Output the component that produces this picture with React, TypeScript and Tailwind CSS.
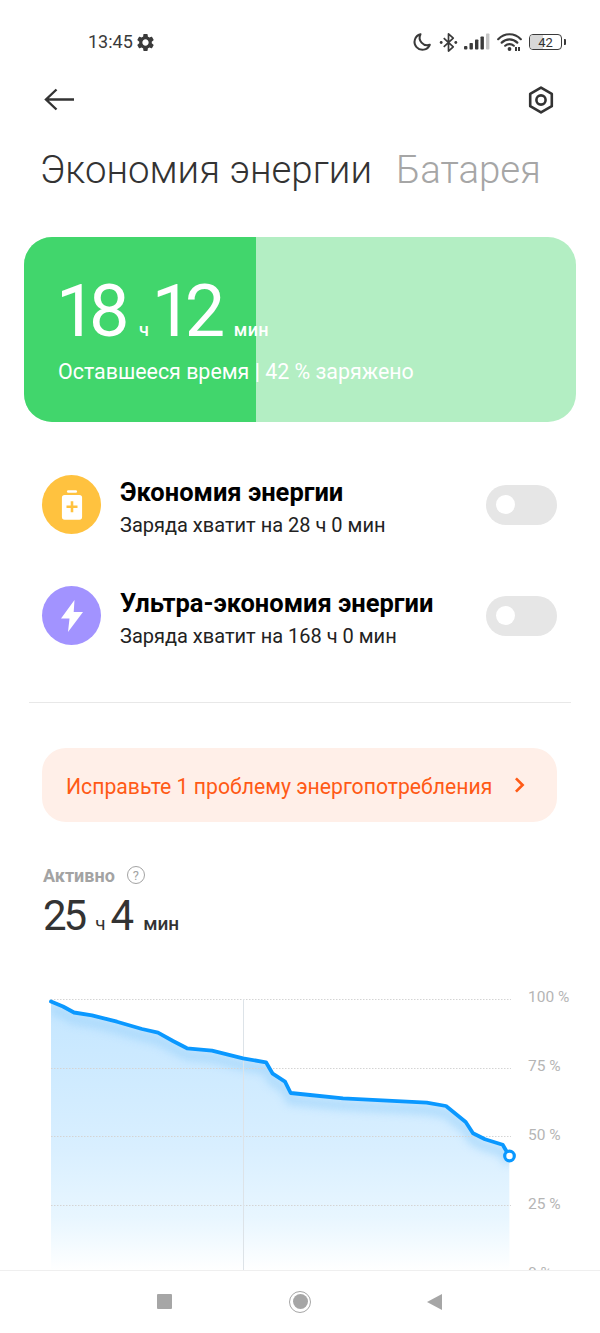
import React from "react";
import { MdSettings } from "react-icons/md";

const line: [number, number][] = [
  [51, 1000.5], [63, 1005.5], [74, 1011.5], [92, 1014.3], [117, 1020.7], [142, 1028], [158, 1031.7],
  [173, 1040], [187, 1047.3], [212, 1049.7], [243, 1057.3], [266, 1061.3], [272.7, 1072.7], [285, 1080.7],
  [290.7, 1092], [310, 1094], [343, 1097.3], [426.7, 1101.7], [446, 1105], [465.7, 1121], [473, 1132.3],
  [485, 1138.3], [502.7, 1143.7], [509.3, 1155],
];
const top = 985;
const pts = line.map(([x, y]) => `${x},${y - top}`).join(" ");
const shadowPts = line.map(([x, y]) => `${x},${y - top + 7}`).join(" ");
const area = `51,285 ${pts} 509.5,285`;

function StatusBar() {
  return (
    <div className="h-[68px] shrink-0 pt-[31px] pl-[88px] pr-[34px] flex items-start justify-between text-[#3a3a3a]">
      <div className="flex items-center gap-[2px] h-[22px]">
        <span className="text-[18px] leading-[22px]">13:45</span>
        <MdSettings className="w-[21px] h-[21px]" />
      </div>
      <div className="flex items-center h-[22px]">
        <svg viewBox="0 0 20 20" className="w-[20px] h-[20px] mr-[7px]" fill="none" stroke="#3a3a3a" strokeWidth="2">
          <path d="M8.500 2.200a7.900 7.900 0 1 0 9.300 10.600A7.600 7.600 0 0 1 8.500 2.200z" strokeLinejoin="round" />
        </svg>
        <svg viewBox="0 0 20 22" className="w-[19px] h-[21px] mr-[6px]" fill="none" stroke="#3a3a3a" strokeWidth="1.800">
          <path d="M5 6.500l10 9-5 4.500V2l5 4.500-10 9" strokeLinejoin="round" />
          <circle cx="2.300" cy="11" r="1.500" fill="#3a3a3a" stroke="none" />
          <circle cx="17.700" cy="11" r="1.500" fill="#3a3a3a" stroke="none" />
        </svg>
        <svg viewBox="0 0 26 18" className="w-[26px] h-[18px] mr-[7px]" fill="#3a3a3a">
          <rect x="0" y="13" width="3.400" height="3.600" rx="1" />
          <rect x="5.500" y="10" width="3.400" height="6.600" rx="0.800" />
          <rect x="11" y="6.500" width="3.400" height="10" rx="0.800" />
          <rect x="16.500" y="3.500" width="3.400" height="13" rx="0.800" />
          <rect x="22" y="0.500" width="3.400" height="16" rx="0.800" fill="#c4c4c4" />
        </svg>
        <svg viewBox="0 0 25 20" className="w-[25px] h-[20px] mr-[7px]" fill="none" stroke="#3a3a3a" strokeWidth="2.200" strokeLinecap="round">
          <path d="M1.200 7.200C7.500 .6 17.500 .6 23.800 7.200" />
          <path d="M4.700 10.600c4.400-4.400 11.200-4.400 15.600 0" />
          <path d="M8.200 13.700c2.400-2.200 6.200-2.200 8.600 0" />
          <circle cx="12.500" cy="17" r="1.900" fill="#3a3a3a" stroke="none" />
          <rect x="18" y="15" width="2" height="4" fill="#3a3a3a" stroke="none" />
          <rect x="21" y="15" width="2" height="4" fill="#3a3a3a" stroke="none" />
        </svg>
        <div className="relative w-[33px] h-[16px] rounded-[4px] border-[1.500px] border-[#3a3a3a] overflow-hidden flex items-center justify-center">
          <div className="absolute left-0 top-0 bottom-0 w-[42%] bg-[#d8d8d8]" />
          <span className="relative text-[13px] leading-none text-[#333]">42</span>
        </div>
        <div className="w-[2px] h-[6px] ml-[2px] bg-[#3a3a3a] rounded-r-[1px]" />
      </div>
    </div>
  );
}

function Header() {
  return (
    <div className="h-[63px] shrink-0 pl-[44px] pr-[46px] flex items-center justify-between">
      <svg viewBox="0 0 32 24" className="w-[32px] h-[24px]" fill="none" stroke="#333" strokeWidth="2.400">
        <path d="M30 11.500H2M12.500 1.500L2 11.500l10.500 10" />
      </svg>
      <svg viewBox="0 0 26 28" className="w-[26px] h-[28px]" fill="none" stroke="#333" strokeWidth="2.600">
        <path d="M13 1.600l10.800 6.200v12.400L13 26.400 2.200 20.200V7.800z" strokeLinejoin="round" />
        <circle cx="13" cy="14" r="4.600" />
      </svg>
    </div>
  );
}

function Row({ color, icon, title, sub }: { color: string; icon: React.ReactNode; title: string; sub: string }) {
  return (
    <div className="flex items-center h-[111px] pl-[42px] pr-[43px]">
      <div className={`w-[59px] h-[59px] rounded-full flex items-center justify-center ${color}`}>{icon}</div>
      <div className="ml-[19px] flex-1 pt-[4px]">
        <div className="text-[25.500px] leading-[32px] font-bold text-black whitespace-nowrap">{title}</div>
        <div className="text-[20px] leading-[26px] mt-[4px] text-[#222] whitespace-nowrap">{sub}</div>
      </div>
      <div className="w-[71px] h-[40px] rounded-full bg-[#e6e6e6] flex items-center pl-[10px]">
        <div className="w-[19px] h-[19px] rounded-full bg-white" />
      </div>
    </div>
  );
}

export default function App() {
  return (
    <div className="w-[600px] h-[1333px] bg-white overflow-hidden flex flex-col font-['Roboto',sans-serif]">
      <StatusBar />
      <Header />
      <div className="shrink-0 h-[106px] pl-[40px] flex items-start gap-[24px] pt-[16px] text-[38.400px] leading-[46px] font-light whitespace-nowrap">
        <span className="text-[#333]">Экономия энергии</span>
        <span className="text-[#a6a6a6]">Батарея</span>
      </div>
      <div className="shrink-0 relative mx-[24px] h-[185px] rounded-[28px] overflow-hidden bg-[#b3eec3] text-white">
        <div className="absolute left-0 top-0 bottom-0 w-[232px] bg-[#41d66c]" />
        <div className="relative pl-[32px] pt-[34px]">
          <div className="flex items-baseline h-[82px] whitespace-nowrap">
            <span className="text-[72px] leading-[82px] tracking-[-7.500px]">18</span>
            <span className="text-[18px] font-medium ml-[17px] mr-[3px]">ч</span>
            <span className="text-[72px] leading-[82px] tracking-[-7.500px]">12</span>
            <span className="text-[18px] font-medium ml-[16px] tracking-[0.4px]">мин</span>
          </div>
          <div className="pl-[2px] text-[21.400px] leading-[26px] mt-[6px] whitespace-nowrap">Оставшееся время | 42 % заряжено</div>
        </div>
      </div>
      <div className="shrink-0 mt-[27px]">
        <Row
          color="bg-[#ffc23f]"
          title="Экономия энергии"
          sub="Заряда хватит на 28 ч 0 мин"
          icon={
            <svg viewBox="0 0 24 32" className="w-[22px] h-[30px]">
              <rect x="6.500" y="0" width="11" height="2.600" rx="1.300" fill="#fff" />
              <rect x="1" y="5" width="22" height="27" rx="3" fill="#fff" />
              <path d="M12 12v12M6 18h12" stroke="#ffc23f" strokeWidth="2.800" />
            </svg>
          }
        />
        <Row
          color="bg-[#a293ff]"
          title="Ультра-экономия энергии"
          sub="Заряда хватит на 168 ч 0 мин"
          icon={
            <svg viewBox="0 0 22 32" className="w-[22px] h-[32px]" fill="#fff">
              <path d="M13.500 0L0 18.500h8.500L7 32l15-20h-9.300z" />
            </svg>
          }
        />
      </div>
      <div className="shrink-0 mt-[31px] mx-[29px] h-px bg-[#e8e8e8]" />
      <div className="shrink-0 mt-[45px] ml-[42px] mr-[43px] h-[74px] rounded-[24px] bg-[#ffefe8] flex items-center justify-between pl-[24px] pr-[32px]">
        <span className="text-[21.200px] text-[#ff5a16] whitespace-nowrap pt-[3px]">Исправьте 1 проблему энергопотребления</span>
        <svg viewBox="0 0 12 18" className="w-[11px] h-[16px]" fill="none" stroke="#ff5a16" strokeWidth="3">
          <path d="M2 1.500L9.500 9 2 16.500" />
        </svg>
      </div>
      <div className="shrink-0 mt-[41px] pl-[43px]">
        <div className="flex items-center h-[24px]">
          <span className="text-[18px] font-bold text-[#a3a3a3]">Активно</span>
          <span className="ml-[12px] w-[18px] h-[18px] rounded-full border-[1.500px] border-[#a3a3a3] text-[#a3a3a3] text-[13px] leading-none flex items-center justify-center">?</span>
        </div>
        <div className="flex items-baseline h-[50px] mt-[4px] text-[#333] whitespace-nowrap">
          <span className="text-[42px] leading-[50px] tracking-[-3px]">25</span>
          <span className="text-[19px] ml-[11px] mr-[5px]">ч</span>
          <span className="text-[42px] leading-[50px]">4</span>
          <span className="text-[19px] font-medium ml-[9px]">мин</span>
        </div>
      </div>
      <div className="mt-[45px] flex-1 min-h-0 overflow-hidden flex items-start relative">
        <svg viewBox="0 0 520 300" className="w-[520px] h-[300px] shrink-0" fill="none">
          <defs>
            <linearGradient id="fillG" x1="0" y1="0" x2="0" y2="1">
              <stop offset="0" stopColor="#c4e6ff" />
              <stop offset="0.55" stopColor="#d9efff" />
              <stop offset="0.8" stopColor="#e8f6ff" />
              <stop offset="1" stopColor="#ffffff" />
            </linearGradient>
            <filter id="blurS"><feGaussianBlur stdDeviation="4" /></filter>
            <clipPath id="areaClip"><polygon points={area} /></clipPath>
          </defs>
          <polygon points={area} fill="url(#fillG)" />
          <g clipPath="url(#areaClip)">
            <polyline points={shadowPts} stroke="#9fd4fb" strokeWidth="9" opacity="0.7" filter="url(#blurS)" />
          </g>
          {[13, 82, 150, 219].map((y) => (
            <line key={y} x1="51" x2="511" y1={y + 0.5} y2={y + 0.5} stroke="#d4d4d4" strokeWidth="1" strokeDasharray="1.500 1.500" />
          ))}
          <line x1="243.500" x2="243.500" y1="13" y2="285" stroke="#dde3e8" strokeWidth="1" />
          <polyline points={pts} stroke="#0a98ff" strokeWidth="3.800" strokeLinejoin="round" strokeLinecap="round" />
          <circle cx="509.500" cy={1155 - top} r="4.800" fill="#fff" stroke="#0a98ff" strokeWidth="3.200" />
        </svg>
        <div className="ml-[8px] pt-[1px] flex flex-col gap-[48.900px] text-[15.500px] leading-[20px] text-[#b5b5b5] whitespace-nowrap">
          <span>100 %</span>
          <span>75 %</span>
          <span>50 %</span>
          <span>25 %</span>
          <span>0 %</span>
        </div>
      </div>
      <div className="shrink-0 h-[63px] bg-white border-t border-[#efefef] flex items-center pb-[1px] relative z-10">
        <div className="ml-[157px] w-[15px] h-[15px] bg-[#a6a6a6] rounded-[1px]" />
        <div className="ml-[117px] w-[22px] h-[22px] rounded-full border-[1.800px] border-[#a6a6a6] flex items-center justify-center">
          <div className="w-[15px] h-[15px] rounded-full bg-[#a6a6a6]" />
        </div>
        <svg viewBox="0 0 15 16" className="ml-[116px] w-[15px] h-[16px]" fill="#a6a6a6">
          <path d="M15 0v16L0 8z" />
        </svg>
      </div>
    </div>
  );
}
